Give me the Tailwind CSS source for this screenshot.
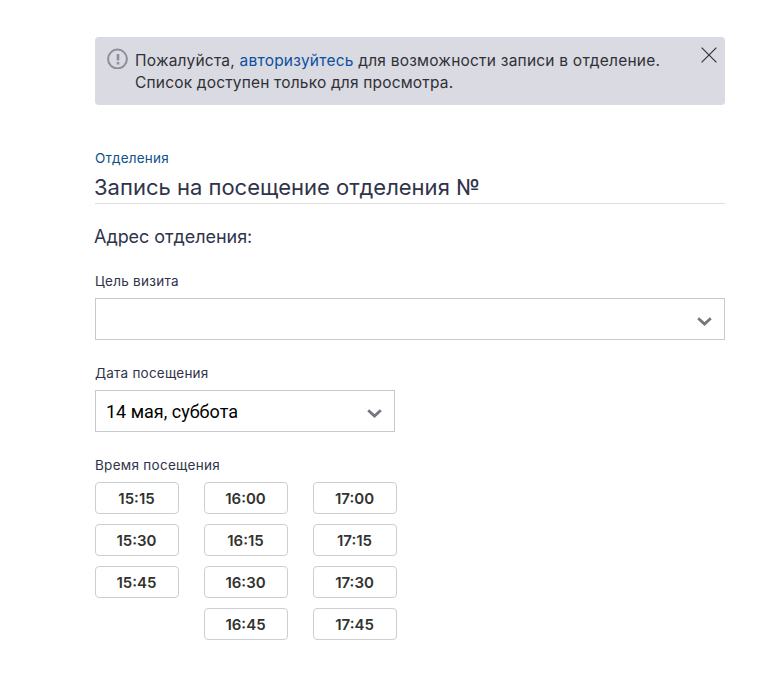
<!DOCTYPE html>
<html lang="ru">
<head>
<meta charset="utf-8">
<title>Запись на посещение отделения</title>
<script src="https://cdn.jsdelivr.net/npm/@tailwindcss/browser@4"></script>
</head>
<body class="bg-white font-['Inter','Liberation_Sans',sans-serif] text-[#30344a]">
<main class="ml-[95px] w-[630px] pt-[37px]">
  <div class="flex h-[68px] rounded-[4px] bg-[#d9dae2] pt-3 pl-3 text-[#303136]">
    <svg class="-mt-0.5 mr-[7px] h-[22px] w-[21px] shrink-0" viewBox="0 0 21 22" fill="none" stroke="#8c8e9b" stroke-width="2"><circle cx="10.5" cy="12" r="9.4"/><path d="M11 7v6.5M11 15v2.4" stroke-width="2.6"/></svg>
    <p class="grow pt-px text-[15.5px] leading-[22px] tracking-[0.22px] whitespace-nowrap"><span>Пожалуйста, <a href="#" class="text-[#0d4fa0]">авторизуйтесь</a> для возможности записи в отделение.</span><br><span class="tracking-[0.18px]">Список доступен только для просмотра.</span></p>
    <button class="mr-[8px] -mt-0.5 h-4 w-4 shrink-0" aria-label="Закрыть"><svg class="h-4 w-4" viewBox="0 0 16 16" fill="none" stroke="#38393e" stroke-width="1.3"><path d="M.6.6l14.8 14.8M15.4.6L.6 15.4"/></svg></button>
  </div>
  <a href="#" class="mt-[43px] block text-[13.5px] leading-5 tracking-[0.2px] text-[#0f5288]">Отделения</a>
  <h1 class="flex h-[36px] items-center border-b border-[#dcdddf] pt-[3px] text-[22px] leading-8"><span class="-ml-px">Запись на посещение отделения №</span></h1>
  <h2 class="-ml-px mt-[21px] text-[18px] leading-6 tracking-[-0.04px]">Адрес отделения:</h2>
  <label class="mt-[22px] block text-[13.5px] leading-5 tracking-[0.28px]">Цель визита</label>
  <div class="mt-[7px] flex h-[42px] items-center justify-end border border-[#c8c9cb] pr-[12px]">
    <svg class="mt-1 h-[10px] w-[15px]" viewBox="0 0 15 10" fill="none" stroke="#75777d" stroke-width="2.8"><path d="M1.2 2.2l6.3 5.8 6.3-5.8"/></svg>
  </div>
  <label class="mt-[23px] block text-[13.5px] leading-5 tracking-[0.22px]">Дата посещения</label>
  <div class="mt-[7px] flex h-[42px] w-[300px] items-center justify-between border border-[#c8c9cb] pr-[12px] pl-[11px]">
    <span class="-ml-px font-[Roboto,sans-serif] text-[18px] text-black">14 мая, суббота</span>
    <svg class="mt-1 h-[10px] w-[15px]" viewBox="0 0 15 10" fill="none" stroke="#75777d" stroke-width="2.8"><path d="M1.2 2.2l6.3 5.8 6.3-5.8"/></svg>
  </div>
  <p class="mt-[23px] text-[13.5px] leading-5 tracking-[0.28px]">Время посещения</p>
  <div class="mt-[7px] flex items-start gap-[25px] text-[15px] font-semibold text-[#32332f]">
    <div class="flex w-[84px] flex-col gap-2.5">
      <button class="h-8 rounded-[4px] border border-[#cdced2] pt-0.5 pr-px">15:15</button>
      <button class="h-8 rounded-[4px] border border-[#cdced2] pt-0.5 pr-px">15:30</button>
      <button class="h-8 rounded-[4px] border border-[#cdced2] pt-0.5 pr-px">15:45</button>
    </div>
    <div class="flex w-[84px] flex-col gap-2.5">
      <button class="h-8 rounded-[4px] border border-[#cdced2] pt-0.5 pr-px">16:00</button>
      <button class="h-8 rounded-[4px] border border-[#cdced2] pt-0.5 pr-px">16:15</button>
      <button class="h-8 rounded-[4px] border border-[#cdced2] pt-0.5 pr-px">16:30</button>
      <button class="h-8 rounded-[4px] border border-[#cdced2] pt-0.5 pr-px">16:45</button>
    </div>
    <div class="flex w-[84px] flex-col gap-2.5">
      <button class="h-8 rounded-[4px] border border-[#cdced2] pt-0.5 pr-px">17:00</button>
      <button class="h-8 rounded-[4px] border border-[#cdced2] pt-0.5 pr-px">17:15</button>
      <button class="h-8 rounded-[4px] border border-[#cdced2] pt-0.5 pr-px">17:30</button>
      <button class="h-8 rounded-[4px] border border-[#cdced2] pt-0.5 pr-px">17:45</button>
    </div>
  </div>
</main>
</body>
</html>
